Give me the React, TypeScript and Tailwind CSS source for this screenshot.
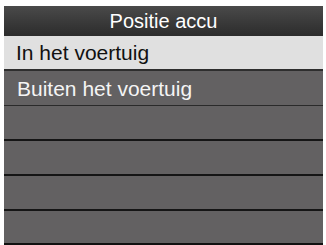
const rows = ["In het voertuig", "Buiten het voertuig", "", "", "", ""];

export default function App() {
  return (
    <div className="w-[326px] h-[245px] bg-white pt-[6px] pl-[4px] pr-[3px] overflow-hidden font-['Liberation_Sans',Arial,sans-serif]">
      <div className="flex flex-col bg-[#626061]">
        {/* Header */}
        <div className="h-[30px] flex items-center justify-center bg-gradient-to-b from-[#4a4a4a] to-[#2c2c2c] text-white text-[20px] leading-none">
          Positie accu
        </div>
        {rows.map((label, i) => (
          <div
            key={i}
            className={
              i === 0
                ? "h-[35px] flex items-center pl-[12px] bg-[#e0e0e0] text-[#111] text-[21px] leading-none border-b-2 border-[#2e2e2e]"
                : i === 1
                  ? "h-[35px] flex items-center pl-[13px] bg-[#636162] text-[#f4f4f4] text-[21px] leading-none border-b border-[#2a2a2a]"
                  : i === rows.length - 1
                    ? "h-[34px] bg-[#636162] border-b-2 border-[#111]"
                    : "h-[35px] bg-[#636162] border-b-2 border-[#151515]"
            }
          >
            {label}
          </div>
        ))}
      </div>
    </div>
  );
}
